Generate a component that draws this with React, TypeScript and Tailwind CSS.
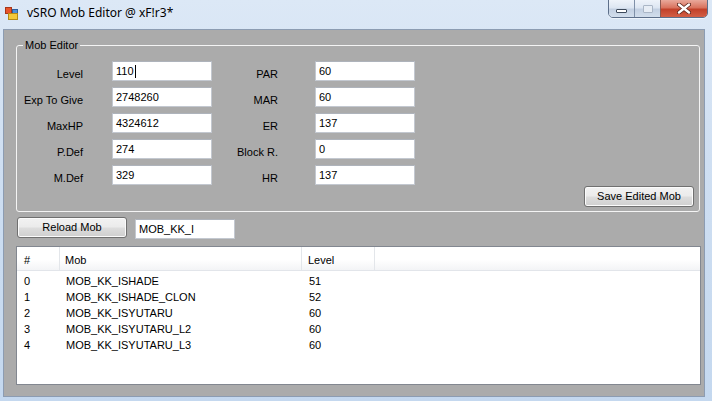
import React from 'react';

type Field = { label: string; value: string; caret?: boolean };

const leftFields: Field[] = [
  { label: 'Level', value: '110', caret: true },
  { label: 'Exp To Give', value: '2748260' },
  { label: 'MaxHP', value: '4324612' },
  { label: 'P.Def', value: '274' },
  { label: 'M.Def', value: '329' },
];

const rightFields: Field[] = [
  { label: 'PAR', value: '60' },
  { label: 'MAR', value: '60' },
  { label: 'ER', value: '137' },
  { label: 'Block R.', value: '0' },
  { label: 'HR', value: '137' },
];

const mobs = [
  { id: 0, name: 'MOB_KK_ISHADE', level: 51 },
  { id: 1, name: 'MOB_KK_ISHADE_CLON', level: 52 },
  { id: 2, name: 'MOB_KK_ISYUTARU', level: 60 },
  { id: 3, name: 'MOB_KK_ISYUTARU_L2', level: 60 },
  { id: 4, name: 'MOB_KK_ISYUTARU_L3', level: 60 },
];

const TextBox = ({ value, caret }: { value: string; caret?: boolean }) => (
  <div className="flex h-[20px] w-[100px] items-center border border-[#c3c8d0] border-t-[#aeb3bb] bg-white pl-[3px] text-[11px] leading-[13px] text-black">
    <span>{value}</span>
    {caret && <span className="ml-px h-[13px] w-px bg-black" />}
  </div>
);

const Button = ({ label, className }: { label: string; className: string }) => (
  <div
    className={`flex items-center justify-center rounded-[3px] border border-[#707070] bg-[linear-gradient(to_bottom,#f2f2f2_0%,#ebebeb_48%,#dddddd_52%,#cfcfcf_100%)] text-[11px] leading-[13px] text-black shadow-[inset_0_0_0_1px_#fbfbfb] ${className}`}
  >
    {label}
  </div>
);

const FieldRow = ({ left, right }: { left: Field; right: Field }) => (
  <div className="flex h-[20px]">
    <div className="w-[66px] pt-[7px] text-right text-[11px] leading-[13px]">{left.label}</div>
    <div className="ml-[29px]">
      <TextBox value={left.value} caret={left.caret} />
    </div>
    <div className="w-[66px] pt-[7px] text-right text-[11px] leading-[13px]">{right.label}</div>
    <div className="ml-[37px]">
      <TextBox value={right.value} />
    </div>
  </div>
);

const AppIcon = () => (
  <svg width="14" height="13" viewBox="0 0 14 13">
    <rect x="0.5" y="0.5" width="6" height="6" fill="#e8552a" stroke="#a8361a" />
    <rect x="7.5" y="2.5" width="5" height="4" fill="#4f8fd8" stroke="#2e5f9e" />
    <rect x="3.5" y="6.5" width="9" height="6" fill="#f3c83a" stroke="#b58a14" />
  </svg>
);

const CaptionButtons = () => (
  <div className="mr-[4px] flex h-[19px] -translate-y-px overflow-hidden rounded-b-[5px] border border-[#5d6f8a] shadow-[0_1px_0_#eef4fb]">
    <div className="flex w-[26px] items-center justify-center border-r border-[#7f90a8] bg-[linear-gradient(to_bottom,#eef3fa_0%,#dde6f2_45%,#c3d0e2_55%,#d2deec_100%)]">
      <div className="mt-[5px] h-[4px] w-[11px] rounded-[1px] border border-[#3d4a5c] bg-white" />
    </div>
    <div className="flex w-[26px] items-center justify-center border-r border-[#8d5a52] bg-[linear-gradient(to_bottom,#eef3fa_0%,#dde6f2_45%,#c3d0e2_55%,#d2deec_100%)]">
      <div className="h-[8px] w-[10px] rounded-[1px] border border-[#aab6c6] bg-[#e7edf5]" />
    </div>
    <div className="flex w-[46px] items-center justify-center bg-[linear-gradient(to_bottom,#e9a99b_0%,#d9735e_45%,#c2412a_55%,#d35f45_100%)]">
      <svg width="14" height="11" viewBox="0 0 14 11">
        <path d="M2 1.5 L12 9.5 M12 1.5 L2 9.5" stroke="#5a2218" strokeWidth="4" strokeLinecap="round" />
        <path d="M2 1.5 L12 9.5 M12 1.5 L2 9.5" stroke="#ffffff" strokeWidth="2.4" strokeLinecap="round" />
      </svg>
    </div>
  </div>
);

export default function App() {
  return (
    <div className="flex h-[401px] w-[712px] flex-col overflow-hidden bg-[linear-gradient(to_bottom,#dce8f6_0%,#cfdff2_40%,#c4d8ef_100%)] font-['Liberation_Sans',Arial,sans-serif] text-black">
      {/* title bar */}
      <div className="flex h-[29px] items-start justify-between">
        <div className="flex items-center pl-[5px] pt-[6px]">
          <AppIcon />
          <span className="ml-[8px] font-['Noto_Sans',sans-serif] text-[12px] leading-[14px] text-black">
            vSRO Mob Editor @ xF!r3*
          </span>
        </div>
        <CaptionButtons />
      </div>

      {/* client area */}
      <div className="mb-[4px] ml-[3px] mr-[7px] flex flex-1 flex-col border border-[#8c9cb2] bg-[#ababab]">
        {/* Mob Editor group */}
        <div className="relative ml-[12px] mr-[4px] mt-[15px] h-[167px] rounded-[3px] border border-[#f4f4f4] pt-[15px]">
          <span className="absolute left-[6px] top-[-7px] bg-[#ababab] px-[2px] text-[11px] leading-[13px]">Mob Editor</span>
          <div className="flex flex-col gap-[6px]">
            {leftFields.map((f, i) => (
              <FieldRow key={f.label} left={f} right={rightFields[i]} />
            ))}
          </div>
          <div className="mt-[1px] flex justify-end pr-[5px]">
            <Button label="Save Edited Mob" className="h-[21px] w-[110px]" />
          </div>
        </div>

        {/* reload row */}
        <div className="ml-[13px] mt-[5px] flex items-start">
          <Button label="Reload Mob" className="h-[21px] w-[110px]" />
          <div className="ml-[8px] mt-[2px]">
            <TextBox value="MOB_KK_I" />
          </div>
        </div>

        {/* mob list */}
        <div className="ml-[12px] mr-[3px] mt-[7px] h-[139px] border border-[#828790] bg-white text-[11px] leading-[16px]">
          <div className="flex h-[24px] border-b border-[#e2e5ea] bg-[linear-gradient(to_bottom,#ffffff_0%,#ffffff_55%,#f3f4f6_100%)]">
            <div className="w-[43px] border-r border-[#e3e6ea] pl-[7px] pt-[5px]">#</div>
            <div className="w-[242px] border-r border-[#e3e6ea] pl-[5px] pt-[5px]">Mob</div>
            <div className="w-[73px] border-r border-[#e3e6ea] pl-[6px] pt-[5px]">Level</div>
            <div className="flex-1" />
          </div>
          <div className="pt-[2px]">
            {mobs.map((m) => (
              <div key={m.id} className="flex h-[16px]">
                <div className="w-[43px] pl-[7px]">{m.id}</div>
                <div className="w-[242px] pl-[6px]">{m.name}</div>
                <div className="w-[73px] pl-[7px]">{m.level}</div>
              </div>
            ))}
          </div>
        </div>
      </div>
    </div>
  );
}
